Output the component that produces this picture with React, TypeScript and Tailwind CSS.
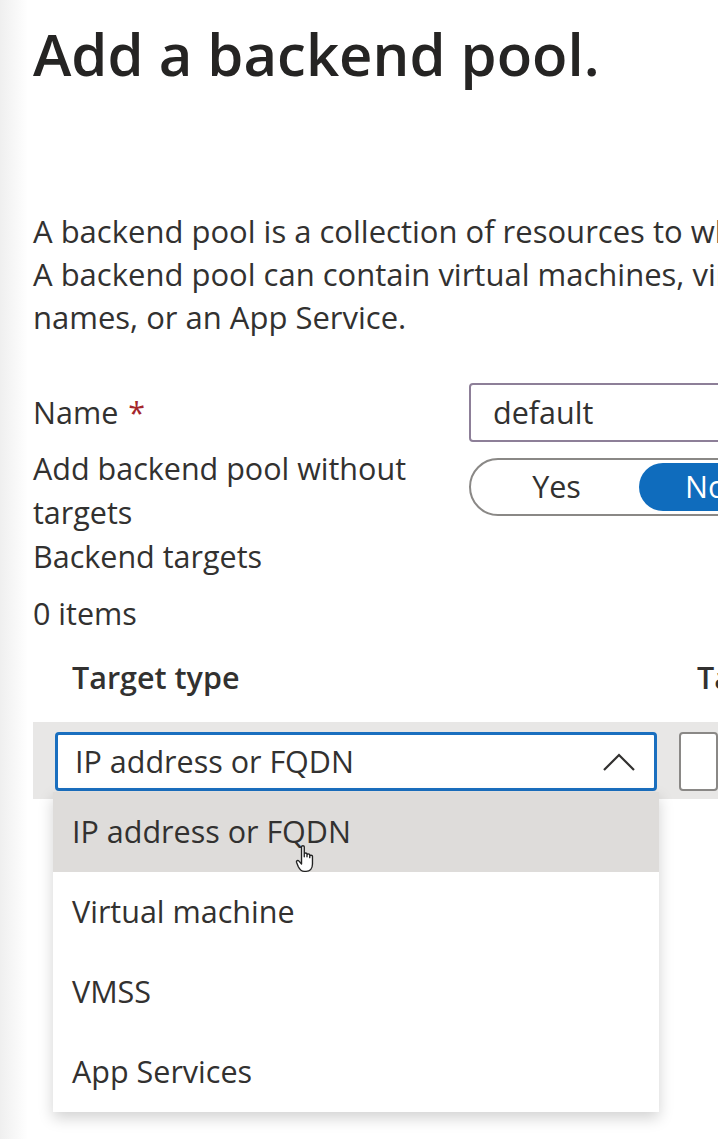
const OPTIONS = ["IP address or FQDN", "Virtual machine", "VMSS", "App Services"];

function ChevronUp() {
  return (
    <svg width="34" height="20" viewBox="0 0 34 20" fill="none">
      <path d="M2 18 L17 3 L32 18" stroke="#323130" strokeWidth="2.2" />
    </svg>
  );
}

function HandCursor() {
  return (
    <svg width="24" height="31" viewBox="0 0 26 34" className="absolute left-[242px] top-[52px]">
      <path
        d="M7 3 C7 1.5 10 1.5 10 3 L10 14 L10 11 C10 9.5 13 9.5 13 11 L13 14 L13 12 C13 10.5 16 10.5 16 12 L16 15 L16 13.5 C16 12 19 12 19 13.5 L19 22 C19 27 16 30 12 30 L10 30 C7 30 5 28 3.5 25 L1.5 20 C1 18.5 3 17.5 4 18.5 L7 22 Z"
        fill="#fff"
        stroke="#222"
        strokeWidth="1.5"
        strokeLinejoin="round"
      />
    </svg>
  );
}

export default function App() {
  return (
    <div
      className="h-[1139px] w-[718px] overflow-hidden bg-[linear-gradient(to_right,#efefef,#ffffff_28px)] text-[#323130]"
      style={{ fontFamily: '"Open Sans", "Noto Sans", sans-serif' }}
    >
      <div className="pl-[33px]">
        <h1 className="pt-[14px] text-[58px] font-semibold leading-[80px] text-[#252423]">
          Add a backend pool.
        </h1>

        <div className="mt-[116px] whitespace-nowrap text-[31px] leading-[43px]">
          <div>A backend pool is a collection of resources to which your application gateway can send traffic.</div>
          <div>A backend pool can contain virtual machines, virtual machine scale sets, IP addresses, domain</div>
          <div>names, or an App Service.</div>
        </div>

        <div className="mt-[44px] grid grid-cols-[436px_1fr] items-start gap-y-[16px] text-[30.5px]">
          <div className="flex h-[59px] items-center">
            Name <span className="ml-[10px] text-[#a4262c]">*</span>
          </div>
          <div className="flex h-[59px] w-[320px] items-center rounded-[4px] border-2 border-[#8d7f98] bg-white pl-[22px]">
            default
          </div>

          <div className="-mt-[12px] w-[430px] leading-[44px]">Add backend pool without targets</div>
          <div className="flex h-[58px] w-[320px] items-center rounded-full border-2 border-[#8a8886] p-[3px]">
            <div className="flex w-[165px] justify-center">Yes</div>
            <div className="flex h-full flex-1 items-center rounded-full bg-[#0f6cbd] pl-[46px] text-white">No</div>
          </div>
        </div>

        <div className="text-[30.5px] leading-[44px]">Backend targets</div>
        <div className="mt-[13px] text-[30.5px] leading-[44px]">0 items</div>

        <div className="mt-[20px] flex whitespace-nowrap text-[30.5px] font-semibold leading-[44px]">
          <div className="w-[664px] shrink-0 pl-[39px]">Target type</div>
          <div>Target</div>
        </div>

        <div className="mt-[23px] flex h-[77px] items-start gap-[22px] bg-[#e8e7e6] pl-[22px] pt-[10px] text-[30.5px]">
          <div className="relative w-[602px] shrink-0">
            <div className="flex h-[59px] items-center justify-between rounded-[4px] border-[3px] border-[#1a6fbf] bg-white pl-[17px] pr-[18px]">
              <span>IP address or FQDN</span>
              <ChevronUp />
            </div>
            <div className="relative z-10 -mx-[2px] mt-[1px] bg-white shadow-[0_6px_14px_rgba(0,0,0,0.18)]">
              {OPTIONS.map((o, i) => (
                <div
                  key={o}
                  className={`relative flex h-[80px] items-center pl-[19px] ${i === 0 ? "bg-[#dedcda]" : ""}`}
                >
                  {o}
                  {i === 0 && <HandCursor />}
                </div>
              ))}
            </div>
          </div>
          <div className="h-[59px] flex-1 rounded-[4px] border-2 border-[#8a8886] bg-white" />
        </div>
      </div>
    </div>
  );
}
